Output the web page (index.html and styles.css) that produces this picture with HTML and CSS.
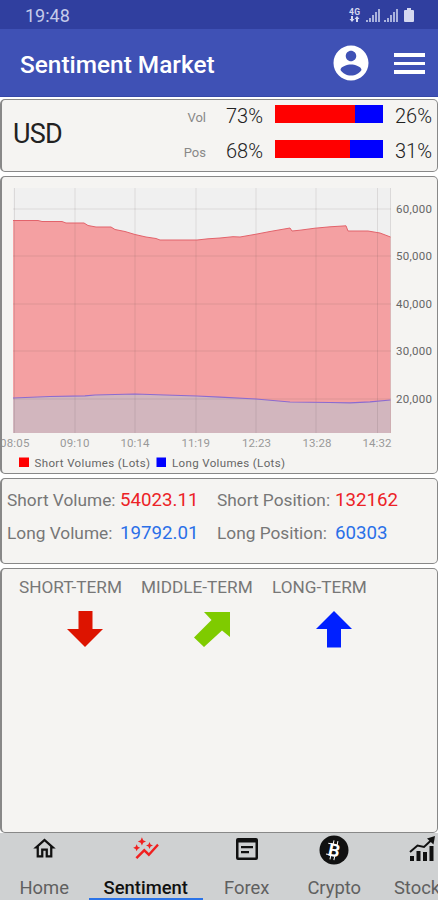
FILE: index.html
```html
<!DOCTYPE html>
<html lang="en">

<head>
    <meta charset="UTF-8">
    <meta name="viewport" content="width=device-width, initial-scale=1.0">
    <title>Sentiment Market</title>
    <link rel="stylesheet" href="styles.css">
</head>

<body>
    <div class="status-bar">
        <span class="clock">19:48</span>
        <svg class="status-icons" width="70" height="20" viewBox="0 0 70 20">
            <text x="1" y="8.500" font-size="8.500" font-weight="700" textLength="11">4G</text>
            <path d="M3 10h2v3h1.500l-2.500 3-2.500-3h1.500zM8 16h2v-3h1.500l-2.500-3-2.500 3h1.500z" />
            <g class="signal">
                <path d="M18 14h2v2h-2zM21 12h2v4h-2zM24 9h2v7h-2zM27 6h2v10h-2zM30 3h2v13h-2z" />
                <path d="M36 14h2v2h-2zM39 12h2v4h-2zM42 9h2v7h-2zM45 6h2v10h-2zM48 3h2v13h-2z" />
            </g>
            <path d="M59 2h4v2h2q1 0 1 1v10q0 1-1 1h-8q-1 0-1-1V5q0-1 1-1h2z" />
        </svg>
    </div>

    <div class="app-bar">
        <h1>Sentiment Market</h1>
        <svg class="account" width="42" height="42" viewBox="0 0 24 24">
            <path d="M12 2C6.480 2 2 6.480 2 12s4.480 10 10 10 10-4.480 10-10S17.520 2 12 2zm0 3c1.660 0 3 1.340 3 3s-1.340 3-3 3-3-1.340-3-3 1.340-3 3-3zm0 14.200c-2.500 0-4.710-1.280-6-3.220.03-1.990 4-3.080 6-3.080 1.990 0 5.970 1.090 6 3.080-1.290 1.940-3.500 3.220-6 3.220z" />
        </svg>
        <div class="menu">
            <span></span>
            <span></span>
            <span></span>
        </div>
    </div>

    <div class="cards">
        <div class="card summary">
            <div class="currency">USD</div>
            <div class="ratios">
                <div class="ratio">
                    <span class="name">Vol</span>
                    <span class="short">73%</span>
                    <div class="bar"><div class="fill" style="width: 74%"></div></div>
                    <span class="long">26%</span>
                </div>
                <div class="ratio">
                    <span class="name">Pos</span>
                    <span class="short">68%</span>
                    <div class="bar"><div class="fill" style="width: 69%"></div></div>
                    <span class="long">31%</span>
                </div>
            </div>
        </div>

        <div class="card chart">
            <svg width="436" height="297" viewBox="1 177 436 297">
                <rect class="plot" x="13" y="188" width="378" height="245" />
                <path class="short-area" d="M13 220.500H38L42 221.500H62L66 223H84L88 225.500L96 227H111L115 229.500L125 231.500L135 234.500L146 237L156 238.500L160 240H197L208 238.800L220 238L233 236.700L240 237L256 234.200L270 231.500L290 228L292 231L300 230.200L315 228.200L330 226.800L346 225.800L348 231H368L380 233L390.500 237V433H13z" />
                <path class="long-area" d="M13 398L50 396.500L85 395.800L95 395L135 394L165 395L197 396L220 397.200L256 399L290 402L330 402.500L350 402.800L370 401.800L390.500 400V433H13z" />
                <path class="grid" d="M13 209H391M13 256H391M13 304H391M13 351H391M13 399H391M14.500 188V433M75 188V433M135 188V433M196 188V433M256 188V433M316 188V433M377.500 188V433M390.500 188V433" />
                <path class="short-line" d="M13 220.500H38L42 221.500H62L66 223H84L88 225.500L96 227H111L115 229.500L125 231.500L135 234.500L146 237L156 238.500L160 240H197L208 238.800L220 238L233 236.700L240 237L256 234.200L270 231.500L290 228L292 231L300 230.200L315 228.200L330 226.800L346 225.800L348 231H368L380 233L390.500 237" />
                <path class="long-line" d="M13 398L50 396.500L85 395.800L95 395L135 394L165 395L197 396L220 397.200L256 399L290 402L330 402.500L350 402.800L370 401.800L390.500 400" />

                <g class="y-labels">
                    <text x="396" y="213" textLength="36">60,000</text>
                    <text x="396" y="260" textLength="36">50,000</text>
                    <text x="396" y="307.500" textLength="36">40,000</text>
                    <text x="396" y="355" textLength="36">30,000</text>
                    <text x="396" y="402.500" textLength="36">20,000</text>
                </g>
                <g class="x-labels">
                    <text x="0" y="446.500" textLength="29.500">08:05</text>
                    <text x="60" y="446.500" textLength="29.500">09:10</text>
                    <text x="120.500" y="446.500" textLength="29">10:14</text>
                    <text x="181.500" y="446.500" textLength="28.500">11:19</text>
                    <text x="242" y="446.500" textLength="29">12:23</text>
                    <text x="302.500" y="446.500" textLength="29">13:28</text>
                    <text x="362.500" y="446.500" textLength="29">14:32</text>
                </g>
                <g class="legend">
                    <rect class="red" x="19" y="457.500" width="10" height="9.500" />
                    <text x="34.500" y="466.500" textLength="115.500">Short Volumes (Lots)</text>
                    <rect class="blue" x="156.500" y="457.500" width="9.500" height="9.500" />
                    <text x="172" y="466.500" textLength="113">Long Volumes (Lots)</text>
                </g>
            </svg>
        </div>

        <div class="card totals">
            <span class="label">Short Volume:</span>
            <span class="value red">54023.11</span>
            <span class="label">Short Position:</span>
            <span class="value red">132162</span>
            <span class="label">Long Volume:</span>
            <span class="value blue">19792.01</span>
            <span class="label">Long Position:</span>
            <span class="value blue">60303</span>
        </div>

        <div class="card terms">
            <div class="term short-term">
                <span>SHORT-TERM</span>
                <svg width="38" height="38" viewBox="0 0 38 38">
                    <path fill="#dd1400" d="M12.500 1H26.500V19H37L19 37L1 19H12.500z" />
                </svg>
            </div>
            <div class="term middle-term">
                <span>MIDDLE-TERM</span>
                <svg width="38" height="38" viewBox="0 0 38 38">
                    <path fill="#7fcb00" d="M11 2H37V27L29 20.500L11 37L1 27.500L18.500 10z" />
                </svg>
            </div>
            <div class="term long-term">
                <span>LONG-TERM</span>
                <svg width="38" height="38" viewBox="0 0 38 38">
                    <path fill="#0020ff" d="M19 1L37 19H26V37.500H12V19H1z" />
                </svg>
            </div>
        </div>
    </div>

    <div class="tabs">
        <div class="tab">
            <svg width="27" height="27" viewBox="0 0 24 24">
                <path d="M12 5.690l5 4.500V18h-2v-6H9v6H7v-7.810l5-4.500M12 3L2 12h3v8h6v-6h2v6h6v-8h3L12 3z" />
            </svg>
            <span>Home</span>
        </div>
        <div class="tab wide active">
            <svg width="28" height="28" viewBox="0 0 24 24">
                <path d="M14.060 9.940L12 9l2.060-.94L15 6l.94 2.060L18 9l-2.060.94L15 12l-.94-2.060zM4 14l.94-2.060L7 11l-2.060-.94L4 8l-.94 2.060L1 11l2.060.94L4 14zm4.500-5l1.090-2.410L12 5.500 9.590 4.410 8.500 2 7.410 4.410 5 5.500l2.410 1.090L8.500 9zm-4 11.500l6-6.010 4 4L23 8.930l-1.410-1.410-7.090 7.970-4-4L3 19l1.500 1.500z" />
            </svg>
            <span>Sentiment</span>
        </div>
        <div class="tab">
            <svg width="28" height="28" viewBox="0 0 28 28">
                <path fill-rule="evenodd" d="M5 3H23Q25 3 25 5V23Q25 25 23 25H5Q3 25 3 23V5Q3 3 5 3zM5.500 7.500V22.500H22.500V7.500zM8 11H20V13.200H8zM8 16H16V18.200H8z" />
            </svg>
            <span>Forex</span>
        </div>
        <div class="tab">
            <svg width="30" height="30" viewBox="0 0 30 30">
                <circle cx="15" cy="15" r="14.500" />
                <g class="coin" transform="rotate(12 15 15)">
                    <text x="9.500" y="21.500" font-size="18" font-weight="700">B</text>
                    <path d="M13 5.500V9.500M17 5.500V9.500M13 21V25M17 21V25M8 9.500H12M8 20.500H12" />
                </g>
            </svg>
            <span>Crypto</span>
        </div>
        <div class="tab">
            <svg width="28" height="28" viewBox="0 0 28 28">
                <path d="M2 21h4v5H2zM8.500 16h4v10h-4zM15 17h4v9h-4zM21.500 11h4v15h-4z" />
                <path class="trend" d="M2 17L9.500 10.500L16 12L23.500 5" />
                <path d="M19 3.500L27 1L25.500 9.500z" />
            </svg>
            <span>Stocks</span>
        </div>
    </div>
</body>

</html>
```
FILE: styles.css
```css
* {
    box-sizing: border-box;
}

body {
    font-family: Roboto, "Liberation Sans", sans-serif;
    background-color: #fff;
    color: #222;
    margin: 0;
    display: flex;
    flex-direction: column;
    height: 900px;
    overflow: hidden;
}

svg {
    display: block;
    flex-shrink: 0;
}

.status-bar {
    display: flex;
    justify-content: space-between;
    align-items: center;
    height: 29px;
    padding: 3px 20px 0 25px;
    background-color: #303f9f;
    color: #c5cbea;
    font-size: 18px;
}

.clock {
    padding-bottom: 2px;
}

.status-icons {
    fill: #d5d9f0;
}

.signal {
    fill: #a9b2dd;
}

.app-bar {
    display: flex;
    align-items: center;
    height: 68px;
    padding: 0 13px 0 20px;
    background-color: #3f51b5;
    border-bottom: 1px solid #3647a8;
}

.app-bar h1 {
    flex: 1;
    margin: 4px 0 0;
    font-size: 24.400px;
    font-weight: 500;
    color: #fff;
}

.account {
    fill: #fff;
    margin-right: 22px;
    margin-top: 1px;
}

.menu {
    display: flex;
    flex-direction: column;
    gap: 5px;
    width: 31px;
    margin-top: 2px;
}

.menu span {
    height: 3.500px;
    background-color: #fff;
}

.cards {
    display: flex;
    flex-direction: column;
    gap: 4px;
    height: 736px;
    padding-top: 2px;
}

.card {
    background-color: #f5f4f2;
    border: 1px solid #888;
    border-left-width: 2px;
    border-radius: 5px;
}

.summary {
    display: flex;
    height: 73px;
    padding: 0 5px 0 11px;
    align-items: center;
    justify-content: space-between;
}

.currency {
    font-size: 27px;
    color: #222;
    letter-spacing: -0.800px;
    padding-bottom: 2px;
}

.ratios {
    display: flex;
    flex-direction: column;
    gap: 11px;
    padding-bottom: 4px;
}

.ratio {
    display: grid;
    grid-template-columns: 32px 61px 108px 49px;
    align-items: center;
    height: 24px;
    font-size: 20px;
    font-weight: 300;
}

.ratio .name {
    font-size: 13px;
    font-weight: 400;
    color: #888;
    padding-top: 4px;
    padding-right: 8px;
    text-align: right;
}

.ratio .short {
    padding-left: 12px;
}

.ratio .long {
    text-align: right;
}

.bar {
    height: 18px;
    background-color: #0000ff;
    margin-bottom: 3px;
}

.fill {
    height: 100%;
    background-color: #ff0000;
}

.chart {
    height: 299px;
    overflow: hidden;
}

.chart svg {
    margin-left: -1px;
}

.plot {
    fill: #f0f0f0;
}

.short-area {
    fill: #f4a0a2;
}

.long-area {
    fill: #d2b6be;
}

.grid {
    stroke: rgba(80, 60, 60, 0.13);
    fill: none;
}

.short-line {
    stroke: #e2636b;
    fill: none;
}

.long-line {
    stroke: #8b6bd0;
    stroke-width: 1.200;
    fill: none;
}

.y-labels {
    font-size: 11.500px;
    fill: #666;
}

.x-labels {
    font-size: 11.500px;
    fill: #999;
}

.legend {
    font-size: 11.500px;
    fill: #666;
}

.legend .red {
    fill: #ff0000;
}

.legend .blue {
    fill: #0000ff;
}

.totals {
    display: grid;
    grid-template-columns: 113px 97px 118px 1fr;
    grid-auto-rows: 33px;
    align-items: center;
    height: 86px;
    padding: 4px 0 0 5px;
    font-size: 17.300px;
}

.totals .label {
    color: #777;
}

.totals .value {
    font-size: 18.700px;
}

.totals .red {
    color: #ec2226;
}

.totals .blue {
    color: #2a6fe8;
}

.terms {
    display: flex;
    gap: 18px;
    height: 265px;
    padding: 8px 0 0 17px;
}

.term {
    display: flex;
    flex-direction: column;
    gap: 12px;
    width: 104px;
    font-size: 17.200px;
    line-height: 21px;
    color: #777;
    white-space: nowrap;
}

.term svg {
    margin-left: 47px;
}

.middle-term {
    width: 113px;
}

.middle-term svg {
    margin-left: 52px;
}

.long-term svg {
    margin-left: 43px;
}

.tabs {
    display: flex;
    height: 67px;
    background-color: #cfd1d2;
    overflow: hidden;
}

.tab {
    display: flex;
    flex-direction: column;
    align-items: center;
    justify-content: space-between;
    flex: 0 0 87.500px;
    padding-top: 2px;
    font-size: 18.400px;
    color: #606060;
    border-bottom: 2px solid transparent;
}

.tab:first-child {
    flex-basis: 88.500px;
}

.tab svg {
    fill: #111;
}

.tab span {
    line-height: 21px;
}

.tab.wide {
    flex-basis: 114.500px;
}

.tab.active {
    color: #111;
    font-weight: 500;
    border-bottom-color: #2a73e8;
}

.tab.active svg {
    fill: #f02020;
}

.tab .coin {
    fill: #fff;
    stroke: #fff;
}

.tab .coin text {
    stroke: none;
}

.trend {
    fill: none;
    stroke: #111;
    stroke-width: 2;
}
```
